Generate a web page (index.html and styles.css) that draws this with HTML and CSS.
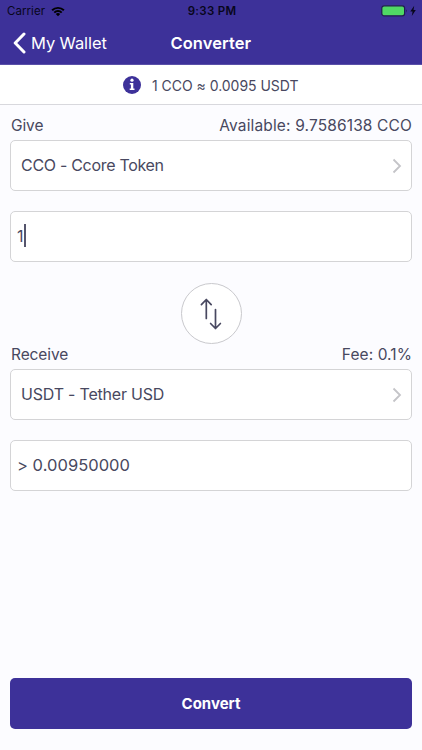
FILE: index.html
```html
<!DOCTYPE html>
<html lang="en">
<head>
<meta charset="utf-8">
<meta name="viewport" content="width=device-width, initial-scale=1">
<title>Converter</title>
<link rel="stylesheet" href="styles.css">
</head>
<body>
<header class="header">
  <div class="status">
    <div class="status-left"><span class="carrier">Carrier</span>
      <svg class="wifi" viewBox="0 0 14 11" width="14" height="11"><path d="M.4 3.6a9.4 9.4 0 0 1 13.2 0L12.2 5a7.4 7.4 0 0 0-10.4 0Z M2.6 5.9a6.2 6.2 0 0 1 8.8 0L10 7.3a4.2 4.2 0 0 0-6 0Z M4.8 8.1a3.1 3.1 0 0 1 4.4 0L7 10.3Z"/></svg>
    </div>
    <span class="time">9:33 PM</span>
    <div class="status-right">
      <svg viewBox="0 0 36 12" width="36" height="12"><rect x=".8" y=".8" width="22.8" height="10" rx="2.4" fill="#50d865" stroke="#211c50" stroke-width="1.2"/><path d="M25 4.2q1.8 1.6 0 3.2Z" fill="#211c50"/><path d="M33.2.8 29.3 6.6h2.3L30.8 11l4-6h-2.3Z" fill="#08061b"/></svg>
    </div>
  </div>
  <nav class="nav">
    <a class="back"><svg viewBox="0 0 13 22" width="13" height="22"><path d="M11 2 2.2 11 11 20" fill="none" stroke="#fff" stroke-width="3" stroke-linecap="round" stroke-linejoin="round"/></svg><span class="back-label">My Wallet</span></a>
    <h1 class="title">Converter</h1>
  </nav>
</header>
<div class="rate">
  <svg viewBox="0 0 18 18" width="18" height="18"><circle cx="9" cy="9" r="9" fill="#3d3199"/><circle cx="9" cy="4.2" r="1.6" fill="#fff"/><path d="M6.8 7h3.5v5.4h1.2V14H6.7v-1.6h1.2V8.6H6.8Z" fill="#fff"/></svg>
  <span class="rate-text">1 CCO ≈ 0.0095 USDT</span>
</div>
<main class="main">
  <div class="labels"><span class="l-give">Give</span><span class="l-available">Available: 9.7586138 CCO</span></div>
  <div class="field select"><span class="v-give">CCO - Ccore Token</span><svg class="chevron" viewBox="0 0 10 16" width="10" height="16"><path d="m1.5 1.5 6.5 6.5-6.5 6.5"/></svg></div>
  <div class="field input"><span class="v-amount">1</span><i class="caret"></i></div>
  <button class="swap" aria-label="Swap"><svg viewBox="0 0 22 32" width="22" height="32"><path d="M6.3 20.5V1.6M1.4 6.7 6.3 1.5l4.9 5.2M15.5 11.5v19M10.6 25.5l4.9 5 4.9-5"/></svg></button>
  <div class="labels second"><span class="l-receive">Receive</span><span class="l-fee">Fee: 0.1%</span></div>
  <div class="field select"><span class="v-receive">USDT - Tether USD</span><svg class="chevron" viewBox="0 0 10 16" width="10" height="16"><path d="m1.5 1.5 6.5 6.5-6.5 6.5"/></svg></div>
  <div class="field input"><span class="v-result">&gt; 0.00950000</span></div>
  <button class="convert">Convert</button>
</main>
</body>
</html>
```
FILE: styles.css
```css
* { box-sizing: border-box; }
body {
  margin: 0;
  height: 750px;
  display: flex;
  flex-direction: column;
  overflow: hidden;
  background: #fcfcff;
  color: #484860;
  font-family: Inter, "Liberation Sans", sans-serif;
  font-size: 16px;
  white-space: nowrap;
}
svg { display: block; flex: none; }
button { padding: 0; font: inherit; }
.header { height: 65px; background: #3d3199; flex: none; border-bottom: 1px solid #5a50a8; }
.status {
  height: 22px;
  padding: 0 5px 0 7px;
  display: grid;
  grid-template-columns: 1fr auto 1fr;
  align-items: center;
  color: #08061b;
  font-size: 11.5px;
}
.status-left { display: flex; align-items: center; gap: 6px; }
.carrier { letter-spacing: .05px; }
.time { font-weight: 600; letter-spacing: .3px; }
.status-right { display: flex; justify-content: flex-end; }
.nav {
  height: 42px;
  padding-left: 13px;
  display: grid;
  grid-template-columns: 157.5px auto 1fr;
  align-items: center;
  color: #fff;
}
.back { display: flex; align-items: center; gap: 5px; }
.back-label { font-size: 16.5px; letter-spacing: -.1px; }
.title { margin: 0; font-size: 16.5px; font-weight: 600; letter-spacing: .08px; }
.rate {
  height: 40px;
  flex: none;
  padding: 1px 0 0 123px;
  display: flex;
  align-items: center;
  gap: 11px;
  background: #fff;
  border-bottom: 1px solid #d8d8dd;
  font-size: 14px;
}
.rate-text { letter-spacing: -.03px; }
.main { flex: 1; display: flex; flex-direction: column; padding: 11px 10px 21px; }
.labels {
  display: flex;
  justify-content: space-between;
  height: 20px;
  line-height: 20px;
  padding: 0 0 0 1px;
  margin-bottom: 4px;
  font-size: 15.5px;
  flex: none;
}
.l-give { letter-spacing: -.1px; }
.l-available { letter-spacing: .14px; }
.l-receive { letter-spacing: -.1px; }
.l-fee { letter-spacing: .08px; }
.second { margin-bottom: 4px; }
.field {
  height: 51px;
  flex: none;
  display: flex;
  align-items: center;
  justify-content: space-between;
  background: #fff;
  border: 1px solid #d4d4d6;
  border-radius: 5px;
}
.field span { padding-bottom: 2px; }
.select { padding: 0 9px 0 10px; margin-bottom: 20px; }
.input { padding-left: 6px; justify-content: flex-start; }
.v-give { letter-spacing: -.3px; }
.v-receive { letter-spacing: -.2px; }
.v-result { font-size: 16.5px; letter-spacing: .03px; }
.caret { width: 2px; height: 23px; background: #55556c; margin: 0 0 2px; }
.chevron { fill: none; stroke: #c4c4c8; stroke-width: 1.8; }
.swap {
  align-self: center;
  width: 61px;
  height: 61px;
  margin: 21px 0 1px;
  flex: none;
  display: flex;
  align-items: center;
  justify-content: center;
  border: 1px solid #c9c9cd;
  border-radius: 50%;
  background: #fff;
}
.swap svg { fill: none; stroke: #484860; stroke-width: 1.7; stroke-linecap: round; stroke-linejoin: round; }
.convert {
  height: 51px;
  margin-top: auto;
  border: 0;
  border-radius: 5px;
  background: #3d3199;
  color: #fff;
  font-size: 15px;
  font-weight: 700;
}
```
